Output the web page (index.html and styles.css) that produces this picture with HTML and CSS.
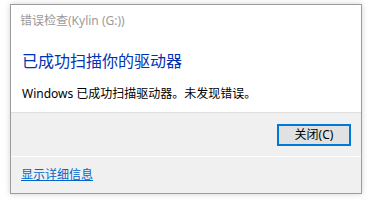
FILE: index.html
```html
<!DOCTYPE html>
<html lang="zh-CN">
<head>
<meta charset="utf-8">
<link rel="stylesheet" href="styles.css">
</head>
<body>
<div class="window">
  <div class="content">
    <div class="title">错误检查(Kylin (G:))</div>
    <div class="heading">已成功扫描你的驱动器</div>
    <div class="message">Windows 已成功扫描驱动器。未发现错误。</div>
  </div>
  <div class="actions">
    <button class="btn">关闭(C)</button>
  </div>
  <div class="footer">
    <a class="link" href="#">显示详细信息</a>
  </div>
</div>
</body>
</html>
```
FILE: styles.css
```css
html, body {
  margin: 0;
  padding: 0;
  background: #ffffff;
}
body {
  width: 372px;
  height: 201px;
  overflow: hidden;
  font-family: "Noto Sans", "Noto Sans CJK SC", sans-serif;
  font-size: 12px;
}
.window {
  box-sizing: border-box;
  margin: 4px 0 0 10px;
  width: 352px;
  height: 190px;
  border: 1px solid #9c9c9c;
  box-shadow: 0 0 6px rgba(0, 0, 0, 0.18);
  background: #f0f0f0;
  display: flex;
  flex-direction: column;
}
.content {
  background: #ffffff;
  height: 107px;
  padding: 0 0 0 9px;
  border-bottom: 1px solid #dfdfdf;
  display: flex;
  flex-direction: column;
}
.title {
  color: #9a9a9a;
  font-size: 12px;
  line-height: 16px;
  margin-top: 8px;
}
.heading {
  color: #0033b3;
  font-size: 16px;
  line-height: 20px;
  margin-top: 21px;
  margin-left: 2px;
  font-family: "Noto Sans CJK SC", sans-serif;
}
.message {
  color: #000000;
  font-size: 12px;
  line-height: 16px;
  margin-top: 16px;
  margin-left: 2px;
}
.actions {
  height: 43px;
  display: flex;
  align-items: center;
  justify-content: flex-end;
  padding-right: 10px;
}
.btn {
  box-sizing: border-box;
  width: 74px;
  height: 22px;
  margin-top: 1px;
  border: 2px solid #0078d7;
  background: #e1e1e1;
  font-family: "Noto Sans", "Noto Sans CJK SC", sans-serif;
  font-size: 12px;
  line-height: 16px;
  color: #000;
  padding: 0;
}
.footer {
  flex: 1;
  border-top: 1px solid #ffffff;
  padding: 9px 0 0 10px;
}
.link {
  color: #0066cc;
  font-size: 12px;
  line-height: 16px;
  font-family: "Noto Sans CJK SC", sans-serif;
  text-decoration: underline;
}
```
